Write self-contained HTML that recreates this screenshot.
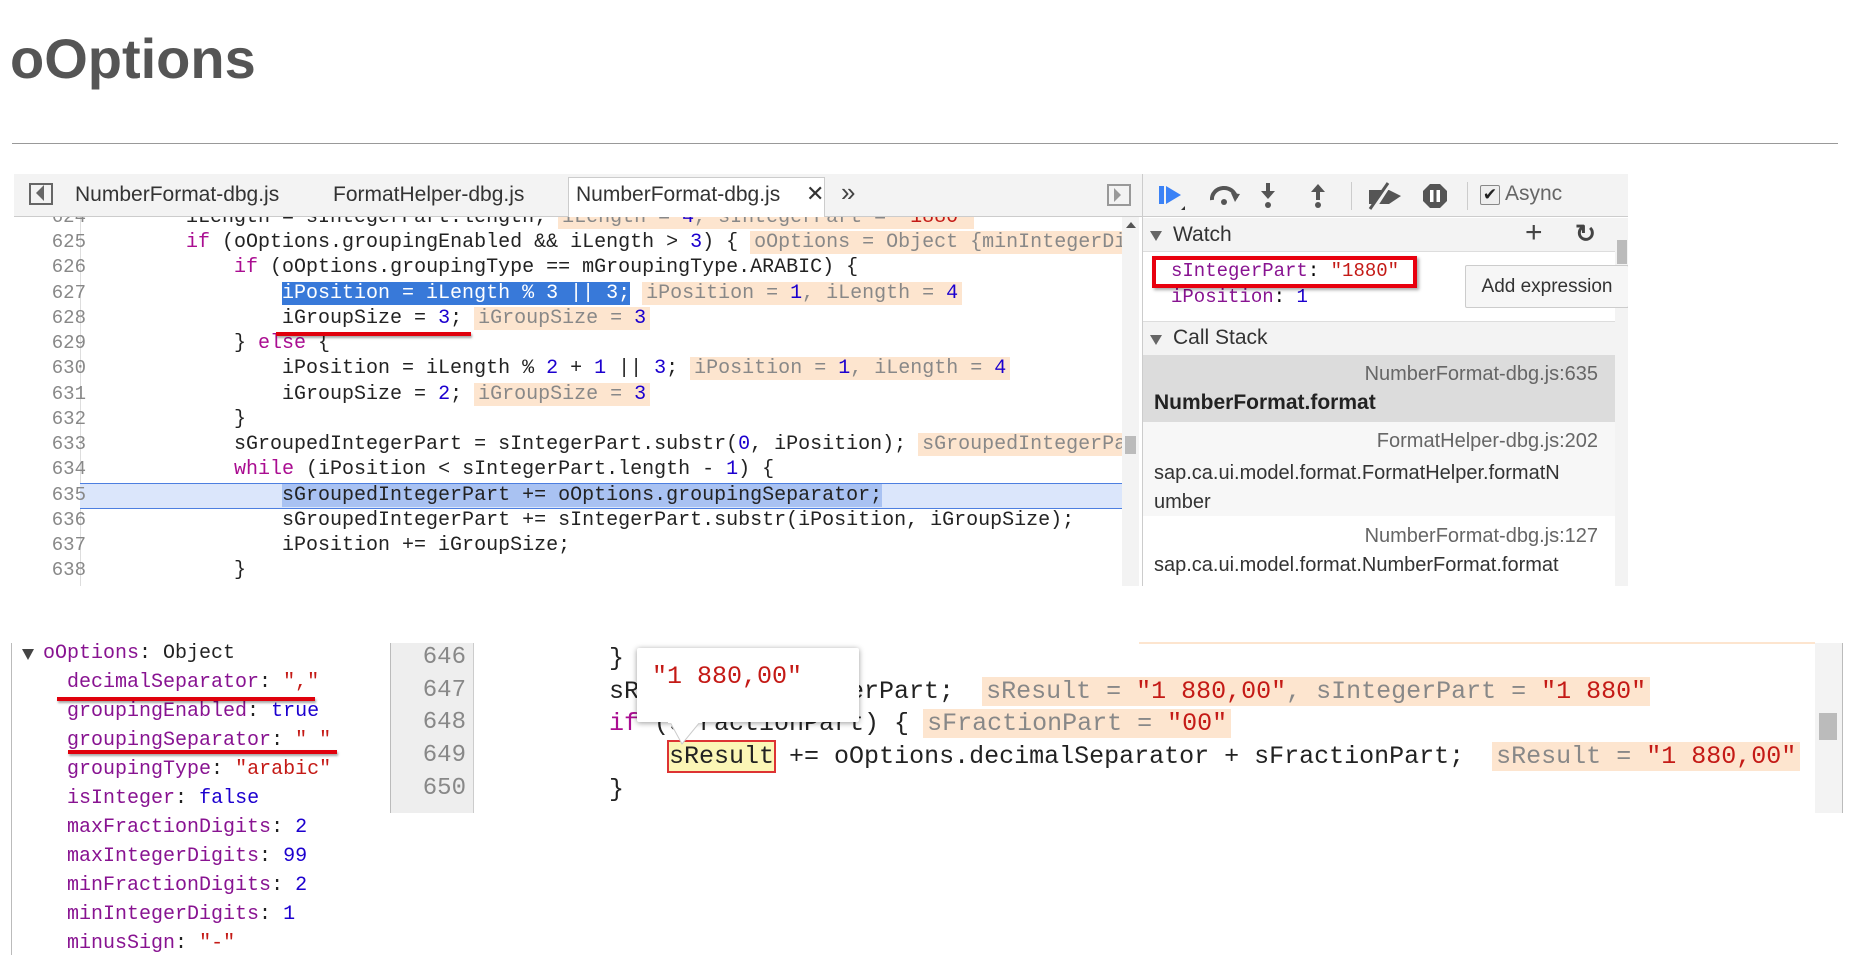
<!DOCTYPE html>
<html><head><meta charset="utf-8"><style>
*{margin:0;padding:0;box-sizing:border-box}
body{width:1856px;height:970px;background:#fff;position:relative;overflow:hidden;font-family:"Liberation Sans",sans-serif}
.a{position:absolute}
.m{font-family:"Liberation Mono",monospace;white-space:pre}
.cl{position:absolute;left:90px;height:25px;line-height:25px;font-size:20px;color:#222}
.ln{position:absolute;left:0;width:72px;text-align:right;font-family:"Liberation Mono",monospace;font-size:19px;color:#888;height:25px;line-height:25px}
.k{color:#aa0d91}.n{color:#1c00cf}.s{color:#c41a16}.p{color:#881391}
.ch{background:#fde5cf;color:#888;padding:0 4px;margin-left:12px}
.ch .n{color:#1c00cf}.ch .s{color:#c41a16}
.ul{position:absolute;height:4px;background:#e0000c;box-shadow:1px 2px 2px rgba(0,0,0,.35)}
.sans{font-family:"Liberation Sans",sans-serif}
</style></head><body>
<div class="a" style="left:10px;top:26px;font-size:56px;font-weight:bold;color:#555">oOptions</div>
<div class="a" style="left:12px;top:143px;width:1826px;height:1px;background:#999"></div>

<div class="a" style="left:14px;top:174px;width:1614px;height:412px;background:#fff;overflow:hidden">
 <div class="a" style="left:0;top:0;width:1128px;height:43px;background:#f3f3f3;border-bottom:1px solid #ccc"></div>
 <div class="a" style="left:15px;top:9px;width:24px;height:22px;border:2px solid #666"></div>
 <div class="a" style="left:22px;top:11px;width:0;height:0;border-top:8px solid transparent;border-bottom:8px solid transparent;border-right:8px solid #666"></div>
 <div class="a sans" style="left:61px;top:9px;font-size:21px;color:#333">NumberFormat-dbg.js</div>
 <div class="a sans" style="left:319px;top:9px;font-size:21px;color:#333">FormatHelper-dbg.js</div>
 <div class="a" style="left:554px;top:3px;width:257px;height:41px;background:#fff;border:1px solid #ccc;border-bottom:none"></div>
 <div class="a sans" style="left:562px;top:9px;font-size:21px;color:#333">NumberFormat-dbg.js</div>
 <div class="a sans" style="left:792px;top:7px;font-size:22px;color:#333">✕</div>
 <div class="a sans" style="left:827px;top:3px;font-size:26px;color:#444">»</div>
 <div class="a" style="left:1093px;top:10px;width:24px;height:22px;border:2px solid #999"></div>
 <div class="a" style="left:1100px;top:14px;width:0;height:0;border-top:7px solid transparent;border-bottom:7px solid transparent;border-left:7px solid #999"></div>
 <div class="a" style="left:66px;top:43px;width:1px;height:369px;background:#ddd"></div>
 <div class="a" style="left:-4px;top:290px;width:3px;height:112px;background:#bbb"></div>
 <div class="a" style="left:1108px;top:43px;width:17px;height:369px;background:#f3f3f3"></div>
 <div class="a" style="left:1111px;top:262px;width:11px;height:18px;background:#bbb"></div>
 <div class="a" style="left:1112px;top:48px;width:0;height:0;border-left:5px solid transparent;border-right:5px solid transparent;border-bottom:6px solid #555"></div>
</div>
<div class="a" style="left:14px;top:217px;width:1108px;height:368px;overflow:hidden">
 <div class="a" style="left:66px;top:266px;width:1108px;height:26px;background:#dbe6fb;border-top:1px solid #4d7fe0;border-bottom:1px solid #4d7fe0"></div>
 <div class="ln" style="top:-12px">624</div>
 <div class="ln" style="top:13px">625</div>
 <div class="ln" style="top:38px">626</div>
 <div class="ln" style="top:64px">627</div>
 <div class="ln" style="top:89px">628</div>
 <div class="ln" style="top:114px">629</div>
 <div class="ln" style="top:139px">630</div>
 <div class="ln" style="top:165px">631</div>
 <div class="ln" style="top:190px">632</div>
 <div class="ln" style="top:215px">633</div>
 <div class="ln" style="top:240px">634</div>
 <div class="ln" style="top:266px">635</div>
 <div class="ln" style="top:291px">636</div>
 <div class="ln" style="top:316px">637</div>
 <div class="ln" style="top:341px">638</div>
 <div class="cl m" style="top:-12px;left:76px">        iLength = sIntegerPart.length;<span class="ch">iLength = <span class="n">4</span>, sIntegerPart = <span class="s">"1880"</span></span></div>
 <div class="cl m" style="top:13px;left:76px">        <span class="k">if</span> (oOptions.groupingEnabled &amp;&amp; iLength &gt; <span class="n">3</span>) {<span class="ch">oOptions = Object {minIntegerDigits: 1</span></div>
 <div class="cl m" style="top:38px;left:76px">            <span class="k">if</span> (oOptions.groupingType == mGroupingType.ARABIC) {</div>
 <div class="cl m" style="top:64px;left:76px">                <span style="background:#3879d9;color:#fff">iPosition = iLength % 3 || 3;</span><span class="ch">iPosition = <span class="n">1</span>, iLength = <span class="n">4</span></span></div>
 <div class="cl m" style="top:89px;left:76px">                iGroupSize = <span class="n">3</span>;<span class="ch">iGroupSize = <span class="n">3</span></span></div>
 <div class="cl m" style="top:114px;left:76px">            } <span class="k">else</span> {</div>
 <div class="cl m" style="top:139px;left:76px">                iPosition = iLength % <span class="n">2</span> + <span class="n">1</span> || <span class="n">3</span>;<span class="ch">iPosition = <span class="n">1</span>, iLength = <span class="n">4</span></span></div>
 <div class="cl m" style="top:165px;left:76px">                iGroupSize = <span class="n">2</span>;<span class="ch">iGroupSize = <span class="n">3</span></span></div>
 <div class="cl m" style="top:190px;left:76px">            }</div>
 <div class="cl m" style="top:215px;left:76px">            sGroupedIntegerPart = sIntegerPart.substr(<span class="n">0</span>, iPosition);<span class="ch">sGroupedIntegerPart = "1"</span></div>
 <div class="cl m" style="top:240px;left:76px">            <span class="k">while</span> (iPosition &lt; sIntegerPart.length - <span class="n">1</span>) {</div>
 <div class="cl m" style="top:266px;left:76px">                <span style="background:#a9c2f2">sGroupedIntegerPart += oOptions.groupingSeparator;</span></div>
 <div class="cl m" style="top:291px;left:76px">                sGroupedIntegerPart += sIntegerPart.substr(iPosition, iGroupSize);</div>
 <div class="cl m" style="top:316px;left:76px">                iPosition += iGroupSize;</div>
 <div class="cl m" style="top:341px;left:76px">            }</div>
</div>
<div class="ul" style="left:276px;top:332px;width:195px"></div>

<div class="a" style="left:1142px;top:174px;width:486px;height:412px;background:#fff;border-left:1px solid #ccc;overflow:hidden">
 <div class="a" style="left:0;top:0;width:486px;height:43px;background:#f3f3f3;border-bottom:1px solid #ccc"></div>
 <svg class="a" style="left:14px;top:8px" width="30" height="30" viewBox="0 0 30 30"><rect x="2" y="4" width="5" height="18" fill="#3b82f6"/><path d="M9 4 L24 13 L9 22Z" fill="#3b82f6"/><path d="M24 28 L28 24 L28 28Z" fill="#333"/></svg>
 <svg class="a" style="left:65px;top:10px" width="34" height="24" viewBox="0 0 34 24"><path d="M4 16 A12 11 0 0 1 28 14" stroke="#555" stroke-width="4" fill="none"/><path d="M23 9 L32 10 L27 18Z" fill="#555"/><circle cx="16" cy="18" r="3" fill="#555"/></svg>
 <svg class="a" style="left:115px;top:8px" width="20" height="28" viewBox="0 0 20 28"><rect x="8" y="1" width="4" height="10" fill="#555"/><path d="M3 9 L17 9 L10 17Z" fill="#555"/><circle cx="10" cy="23" r="3" fill="#555"/></svg>
 <svg class="a" style="left:165px;top:8px" width="20" height="28" viewBox="0 0 20 28"><path d="M3 10 L17 10 L10 2Z" fill="#555"/><rect x="8" y="9" width="4" height="9" fill="#555"/><circle cx="10" cy="23" r="3" fill="#555"/></svg>
 <div class="a" style="left:208px;top:8px;width:1px;height:28px;background:#ccc"></div>
 <svg class="a" style="left:224px;top:8px" width="36" height="28" viewBox="0 0 36 28"><path d="M2 8 L22 8 L34 14 L22 22 L2 22Z" fill="#555"/><path d="M6 28 L24 0" stroke="#f3f3f3" stroke-width="4"/><path d="M3 27 L21 1" stroke="#555" stroke-width="3"/></svg>
 <svg class="a" style="left:279px;top:9px" width="26" height="26" viewBox="0 0 26 26"><path d="M8 1 L18 1 L25 8 L25 18 L18 25 L8 25 L1 18 L1 8Z" fill="#555"/><rect x="8" y="7" width="3.5" height="12" fill="#fff"/><rect x="14.5" y="7" width="3.5" height="12" fill="#fff"/></svg>
 <div class="a" style="left:324px;top:8px;width:1px;height:28px;background:#ccc"></div>
 <div class="a" style="left:337px;top:11px;width:20px;height:20px;border:1px solid #888;background:#eee;border-radius:2px;font-size:17px;line-height:18px;text-align:center;color:#222">✔</div>
 <div class="a sans" style="left:362px;top:8px;font-size:21px;color:#666">Async</div>
 <div class="a" style="left:0;top:44px;width:472px;height:34px;background:#f3f3f3;border-bottom:1px solid #ddd"></div>
 <div class="a" style="left:7px;top:57px;border-left:6px solid transparent;border-right:6px solid transparent;border-top:10px solid #666"></div>
 <div class="a sans" style="left:30px;top:49px;font-size:21px;color:#333">Watch</div>
 <div class="a sans" style="left:382px;top:42px;font-size:30px;color:#444">+</div>
 <div class="a sans" style="left:432px;top:45px;font-size:25px;color:#444;font-weight:bold">↻</div>
 <div class="a" style="left:472px;top:44px;width:14px;height:368px;background:#f3f3f3"></div>
 <div class="a" style="left:474px;top:66px;width:10px;height:24px;background:#bbb"></div>
 <div class="a m" style="left:28px;top:84px;font-size:19px;line-height:26px"><span class="p">sIntegerPart</span>: <span class="s">"1880"</span>
<span class="p">iPosition</span>: <span class="n">1</span></div>
 <div class="a" style="left:9px;top:82px;width:265px;height:32px;border:4px solid #e8000e;box-shadow:2px 2px 3px rgba(0,0,0,.35)"></div>
 <div class="a sans" style="left:322px;top:91px;width:164px;height:43px;border:1px solid #ccc;background:#f6f6f6;font-size:19px;line-height:41px;text-align:center;color:#333;border-radius:2px">Add expression</div>
 <div class="a" style="left:0;top:147px;width:472px;height:34px;background:#f3f3f3;border-top:1px solid #ddd"></div>
 <div class="a" style="left:7px;top:161px;border-left:6px solid transparent;border-right:6px solid transparent;border-top:10px solid #666"></div>
 <div class="a sans" style="left:30px;top:152px;font-size:21px;color:#333">Call Stack</div>
 <div class="a" style="left:0;top:181px;width:472px;height:67px;background:#dcdcdc"></div>
 <div class="a sans" style="right:30px;top:189px;font-size:20px;color:#666">NumberFormat-dbg.js:635</div>
 <div class="a sans" style="left:11px;top:217px;font-size:21px;color:#222;font-weight:bold">NumberFormat.format</div>
 <div class="a" style="left:0;top:248px;width:472px;height:94px;background:#f7f7f7"></div>
 <div class="a sans" style="right:30px;top:256px;font-size:20px;color:#666">FormatHelper-dbg.js:202</div>
 <div class="a sans" style="left:11px;top:285px;font-size:20px;color:#333;line-height:29px">sap.ca.ui.model.format.FormatHelper.formatN<br>umber</div>
 <div class="a sans" style="right:30px;top:351px;font-size:20px;color:#666">NumberFormat-dbg.js:127</div>
 <div class="a sans" style="left:11px;top:380px;font-size:20px;color:#333">sap.ca.ui.model.format.NumberFormat.format</div>
</div>

<div class="a" style="left:11px;top:643px;width:1px;height:312px;background:#bbb"></div>
<div class="a" style="left:22px;top:649px;border-left:6px solid transparent;border-right:6px solid transparent;border-top:11px solid #444"></div>
<div class="a m" style="left:43px;top:639px;font-size:20px;line-height:29px;color:#222"><span class="p">oOptions</span>: Object
  <span class="p">decimalSeparator</span>: <span class="s">","</span>
  <span class="p">groupingEnabled</span>: <span class="n">true</span>
  <span class="p">groupingSeparator</span>: <span class="s">" "</span>
  <span class="p">groupingType</span>: <span class="s">"arabic"</span>
  <span class="p">isInteger</span>: <span class="n">false</span>
  <span class="p">maxFractionDigits</span>: <span class="n">2</span>
  <span class="p">maxIntegerDigits</span>: <span class="n">99</span>
  <span class="p">minFractionDigits</span>: <span class="n">2</span>
  <span class="p">minIntegerDigits</span>: <span class="n">1</span>
  <span class="p">minusSign</span>: <span class="s">"-"</span></div>
<div class="ul" style="left:57px;top:697px;width:258px"></div>
<div class="ul" style="left:68px;top:750px;width:269px"></div>

<div class="a" style="left:390px;top:643px;width:84px;height:170px;background:#eee;border-left:1px solid #bbb;border-right:1px solid #ccc"></div>
<div class="a m" style="left:400px;top:642px;width:66px;text-align:right;font-size:24px;line-height:32.7px;color:#888">646
647
648
649
650</div>
<div class="a" style="left:1139px;top:642px;width:676px;height:2px;background:#fde5cf"></div>
<div class="a" style="left:1815px;top:643px;width:28px;height:170px;background:#f3f3f3;border-right:1px solid #bbb"></div>
<div class="a" style="left:1819px;top:713px;width:18px;height:27px;background:#bbb"></div>
<div class="a" style="left:474px;top:643px;width:1341px;height:170px;overflow:hidden">
<div class="a m" style="left:135px;top:0;font-size:25px;line-height:32.7px;color:#222">}
sResult = sIntegerPart;<span class="ch" style="margin-left:28px">sResult = <span class="s">"1 880,00"</span>, sIntegerPart = <span class="s">"1 880"</span></span>
<span class="k">if</span> (sFractionPart) {<span class="ch" style="margin-left:14px">sFractionPart = <span class="s">"00"</span></span>
    <span style="background:#fbf6b6;outline:2px solid #d33;">sResult</span> += oOptions.decimalSeparator + sFractionPart;<span class="ch" style="margin-left:28px">sResult = <span class="s">"1 880,00"</span></span>
}</div>
</div>
<div class="a" style="left:637px;top:648px;width:222px;height:74px;background:#fff;box-shadow:0 1px 6px rgba(0,0,0,.4);border-radius:2px"></div>
<svg class="a" style="left:668px;top:720px" width="34" height="26" viewBox="0 0 34 26"><path d="M0 0 L34 0 L14 24Z" fill="#fff"/><path d="M2 2 L14 24 L32 2" stroke="#ccc" fill="none"/><rect x="0" y="0" width="34" height="3" fill="#fff"/></svg>
<div class="a m" style="left:652px;top:662px;font-size:25px;color:#c41a16">"1 880,00"</div>
</body></html>
